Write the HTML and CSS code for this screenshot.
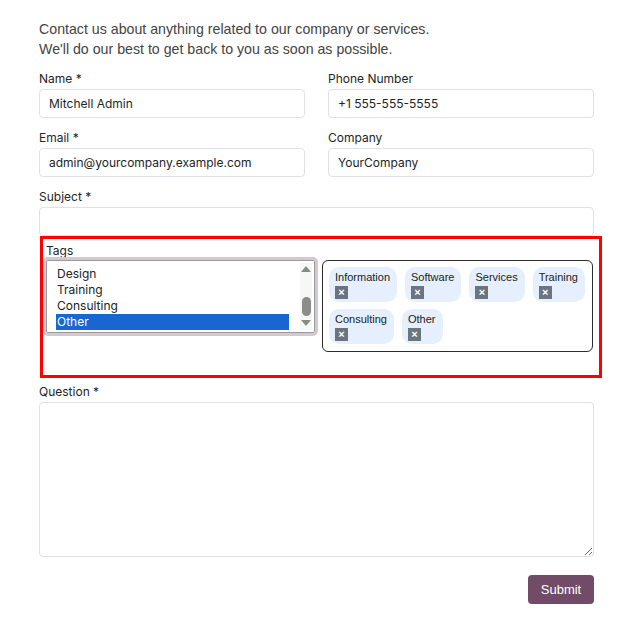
FILE: index.html
```html
<!DOCTYPE html>
<html lang="en">
<head>
    <meta charset="UTF-8">
    <meta name="viewport" content="width=device-width, initial-scale=1.0">
    <link rel="stylesheet" href="styles.css">
</head>
<body>
    <div class="page">
        <p class="intro">Contact us about anything related to our company or services.<br>We'll do our best to get back to you as soon as possible.</p>

        <form class="contact-form">
            <div class="row">
                <div class="field">
                    <label>Name *</label>
                    <input type="text" value="Mitchell Admin">
                </div>
                <div class="field">
                    <label>Phone Number</label>
                    <input type="text" value="+1 555-555-5555">
                </div>
            </div>
            <div class="row">
                <div class="field">
                    <label>Email *</label>
                    <input type="text" value="admin@yourcompany.example.com">
                </div>
                <div class="field">
                    <label>Company</label>
                    <input type="text" value="YourCompany">
                </div>
            </div>
            <div class="field">
                <label>Subject *</label>
                <input type="text" value="">
            </div>

            <!-- highlighted tags block -->
            <div class="tags-box">
                <label class="tags-label">Tags</label>
                <div class="tags-row">
                    <div class="listbox">
                        <div class="options">
                            <div class="option">Design</div>
                            <div class="option">Training</div>
                            <div class="option">Consulting</div>
                            <div class="option selected">Other</div>
                        </div>
                        <div class="scrollbar">
                            <span class="arrow up"></span>
                            <span class="thumb"></span>
                            <span class="arrow down"></span>
                        </div>
                    </div>
                    <div class="chips">
                        <div class="chip">Information<span class="chip-x">×</span></div>
                        <div class="chip">Software<span class="chip-x">×</span></div>
                        <div class="chip">Services<span class="chip-x">×</span></div>
                        <div class="chip">Training<span class="chip-x">×</span></div>
                        <div class="chip">Consulting<span class="chip-x">×</span></div>
                        <div class="chip">Other<span class="chip-x">×</span></div>
                    </div>
                </div>
            </div>

            <div class="field">
                <label>Question *</label>
                <textarea></textarea>
            </div>
            <div class="actions">
                <button type="button" class="submit-button">Submit</button>
            </div>
        </form>
    </div>
</body>
</html>
```

FILE: styles.css
```css
body {
    margin: 0;
    background: #fff;
    color: #212529;
    font-family: Inter, "Liberation Sans", sans-serif;
}

.page {
    width: 555px;
    padding: 19px 0 0 39px;
}

.intro {
    font-family: "Liberation Sans", Arial, sans-serif;
    font-size: 14.2px;
    line-height: 20px;
    color: #444;
    margin: 0 0 12px 0;
}

.row {
    display: flex;
    gap: 23px;
}
.row .field {
    flex: 1;
}

.field {
    display: flex;
    flex-direction: column;
    margin-bottom: 12px;
}

.field label {
    font-size: 12px;
    line-height: 16px;
    margin-bottom: 2px;
}

.field input, .field textarea {
    font-family: Inter, "Liberation Sans", sans-serif;
    font-size: 12px;
    color: #212529;
    height: 29px;
    box-sizing: border-box;
    padding: 0 9px;
    border: 1px solid #dee2e6;
    border-radius: 4px;
    background: #fff;
    outline: none;
}

.field textarea {
    height: 155px;
    resize: vertical;
}

/* Tags block with red highlight */
.tags-box {
    width: 553px;
    margin: -12px 0 6px 1px;
    border: 3px solid #ff0000;
    padding: 5px 3px 23px 0;
}

.tags-label {
    display: block;
    font-size: 12px;
    line-height: 14px;
    margin: 0 0 -1px 3px;
}

.tags-row {
    display: flex;
    align-items: flex-start;
    gap: 4px;
}

.listbox {
    width: 275px;
    height: 79px;
    box-sizing: border-box;
    display: flex;
    border: 3px solid #d3c9d3;
    border-radius: 5px;
    box-shadow: inset 0 0 0 1px #9a9a9a;
    padding: 3px 3px 3px 10px;
    background: #fff;
}

.options {
    flex: 1;
    padding-top: 3px;
    margin-right: 11px;
}

.option {
    font-size: 12px;
    line-height: 16px;
    padding-left: 1px;
    color: #222;
}
.option.selected {
    background: #1a66d1;
    color: #fff;
}

.scrollbar {
    width: 12px;
    display: flex;
    flex-direction: column;
    align-items: center;
    background: #f6f8f6;
}

.arrow {
    width: 0;
    height: 0;
    border-left: 5px solid transparent;
    border-right: 5px solid transparent;
}
.arrow.up {
    border-bottom: 6px solid #8a8a8a;
    margin-top: 3px;
}
.arrow.down {
    border-top: 6px solid #8a8a8a;
    margin-top: 4px;
}

.thumb {
    width: 9px;
    height: 19px;
    border-radius: 5px;
    background: #8c8c8c;
    margin-top: 25px;
}

.chips {
    width: 271px;
    height: 92px;
    box-sizing: border-box;
    margin-top: 3px;
    border: 1px solid #2b2b2b;
    border-radius: 6px;
    padding: 6px 6px;
    display: flex;
    flex-wrap: wrap;
    align-content: flex-start;
    gap: 7px 8px;
}

.chip {
    display: flex;
    flex-direction: column;
    align-items: flex-start;
    background: #e6effd;
    border-radius: 10px;
    padding: 3px 7px 3px 6px;
    font-family: "Liberation Sans", Arial, sans-serif;
    font-size: 11px;
    line-height: 14px;
    color: #222;
}

.chip-x {
    width: 13px;
    height: 13px;
    margin-top: 2px;
    background: #6c757d;
    color: #fff;
    font-size: 11px;
    line-height: 13px;
    text-align: center;
    font-weight: bold;
}

.actions {
    display: flex;
    justify-content: flex-end;
    margin-top: 18px;
}

.submit-button {
    background: #714b67;
    color: #fff;
    border: none;
    border-radius: 4px;
    font-family: "Liberation Sans", Arial, sans-serif;
    font-size: 13px;
    width: 66px;
    height: 29px;
    cursor: pointer;
}
```
